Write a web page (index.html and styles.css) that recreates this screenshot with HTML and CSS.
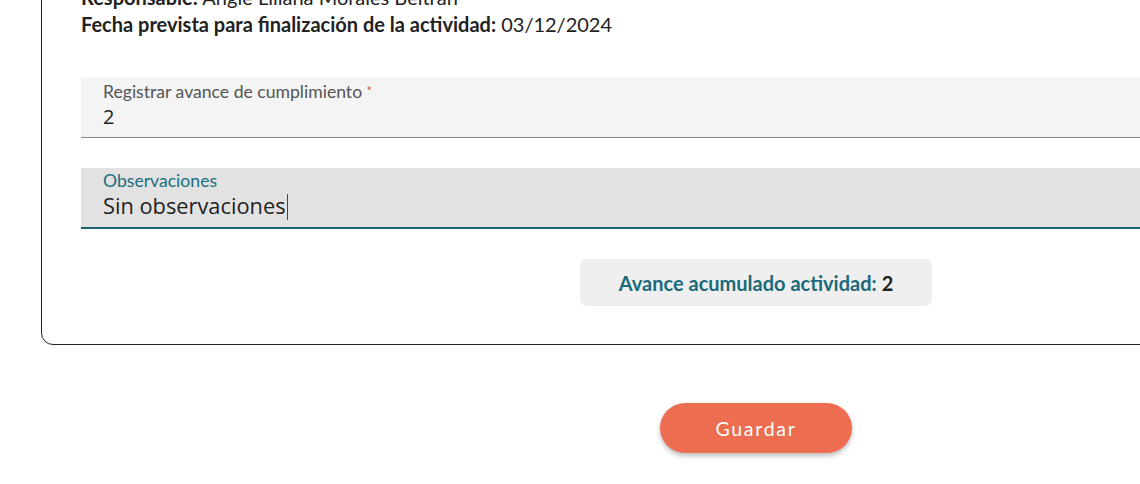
FILE: index.html
```html
<!DOCTYPE html>
<html lang="es">
<head>
  <meta charset="UTF-8">
  <title>Registrar avance</title>
  <link rel="stylesheet" href="styles.css">
</head>
<body>
  <div class="page">
    <div class="card">
      <p class="info"><b>Responsable:</b> Angie Liliana Morales Beltrán</p>
      <p class="info"><b>Fecha prevista para finalización de la actividad:</b> 03/12/2024</p>

      <div class="field">
        <label class="field-label">Registrar avance de cumplimiento <span class="req">*</span></label>
        <div class="field-value">2</div>
      </div>

      <div class="field focused">
        <label class="field-label">Observaciones</label>
        <div class="field-value">Sin observaciones<span class="caret"></span></div>
      </div>

      <div class="total">
        <div class="total-box"><b>Avance acumulado actividad:</b> <span class="num">2</span></div>
      </div>
    </div>

    <div class="actions">
      <button class="btn-save" type="button">Guardar</button>
    </div>
  </div>
</body>
</html>
```

FILE: styles.css
```css
*, *::before, *::after { box-sizing:border-box; margin:0; padding:0; }
html, body { width:100%; height:100%; overflow:hidden; background:#fff; font-family:'Lato','Liberation Sans',sans-serif; color:#222; }
.page { width:1430px; margin-left:41px; margin-top:-39px; }
.card {
  border:1px solid #222; border-radius:12px;
  padding:22px 39px 38px 39px;
}
.info { font-size:20px; line-height:27px; color:#222; }
.info b { font-weight:700; }
.field {
  margin-top:39px; background:#f4f4f4;
  border-bottom:1px solid #8c8c8c;
  padding:4px 22px 6px;
  height:61px;
}
.field + .field { margin-top:30px; }
.field-label { display:block; font-size:17.6px; line-height:21px; color:#555; }
.req { color:#e0525a; font-size:13px; vertical-align:top; }
.field-value { font-family:'Open Sans','Noto Sans',sans-serif; font-size:20px; line-height:26px; color:#222; margin-top:2px; }
.field.focused { background:#e2e2e2; border-bottom:2px solid #1b6570; height:61px; padding-top:2px; }
.field.focused .field-label { color:#1b6f7e; }
.field.focused .field-value { font-size:21.8px; margin-top:2px; }
.caret { display:inline-block; width:1px; height:26px; background:#2a3fb0; vertical-align:-6px; margin-left:1px; }
.total { display:flex; justify-content:center; margin-top:30px; }
.total-box {
  width:352px; height:47px; background:#efefef; border-radius:7px;
  display:flex; align-items:center; justify-content:center;
  font-size:20px; color:#1b6a7b;
}
.total-box b { font-weight:700; }
.total-box .num { color:#222; font-weight:700; margin-left:5px; }
.actions { display:flex; justify-content:center; margin-top:58px; }
.btn-save {
  width:192px; height:50px; border:none; border-radius:25px;
  background:#ec6d4f; color:#fff;
  font-family:'Lato',sans-serif; font-size:19.5px; letter-spacing:1.7px;
  box-shadow:0 3px 5px rgba(0,0,0,0.25);
  cursor:pointer;
}
```
